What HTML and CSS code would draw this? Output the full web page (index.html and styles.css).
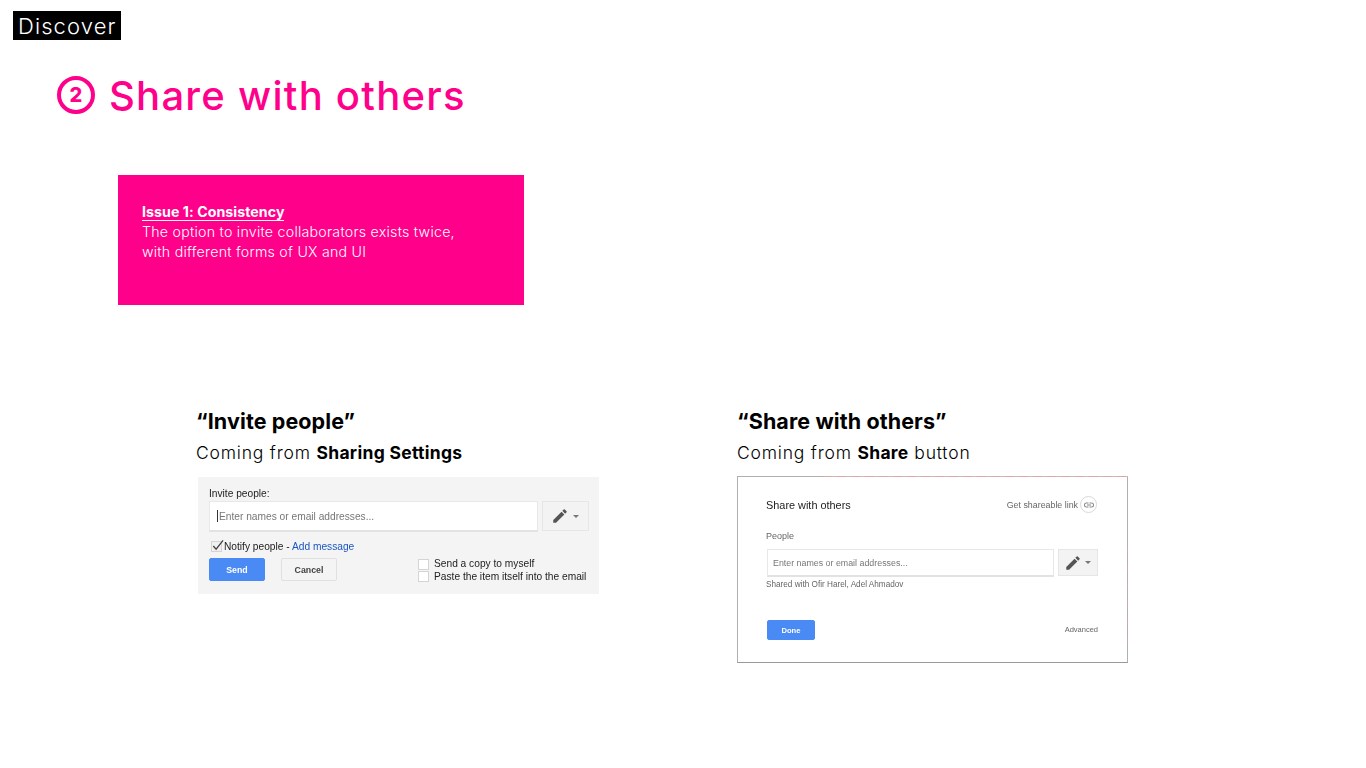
FILE: index.html
```html
<!DOCTYPE html>
<html lang="en">

<head>
  <meta charset="UTF-8">
  <meta name="viewport" content="width=device-width,initial-scale=1.0">
  <title>Discover - Share with others</title>
  <link rel="stylesheet" href="styles.css">
</head>

<body>
  <div class="slide">
    <div class="tag">Discover</div>

    <h1 class="title">
      <span class="step">2</span>
      <span>Share with others</span>
    </h1>

    <div class="callout">
      <div class="callout-head">Issue 1: Consistency</div>
      <p>The option to invite collaborators exists twice,<br>with different forms of UX and UI</p>
    </div>

    <div class="compare">
      <!-- left: sharing settings -->
      <section class="col">
        <h2>“Invite people”</h2>
        <p class="from">Coming from <b>Sharing Settings</b></p>

        <div class="shot invite">
          <div class="invite-label">Invite people:</div>
          <div class="input-row">
            <div class="input"><span class="caret"></span>Enter names or email addresses...</div>
            <div class="perm">
              <svg class="pencil" viewBox="0 0 24 24"><path d="M3 17.25V21h3.75L17.81 9.94l-3.75-3.75L3 17.25zM20.71 7.04a1 1 0 0 0 0-1.41l-2.34-2.34a1 1 0 0 0-1.41 0l-1.83 1.83 3.75 3.75 1.83-1.83z"/></svg>
              <span class="arrow"></span>
            </div>
          </div>
          <div class="notify">
            <span class="check on">
              <svg viewBox="0 0 14 14"><path d="M2.5 7.5 5.5 11 13 1.5" fill="none" stroke="#444" stroke-width="1.4"/></svg>
            </span>
            <span>Notify people - <a>Add message</a></span>
          </div>
          <div class="actions">
            <button class="btn primary">Send</button>
            <button class="btn">Cancel</button>
            <div class="options">
              <div class="option"><span class="check"></span>Send a copy to myself</div>
              <div class="option"><span class="check"></span>Paste the item itself into the email</div>
            </div>
          </div>
        </div>
      </section>

      <!-- right: share button -->
      <section class="col">
        <h2>“Share with others”</h2>
        <p class="from">Coming from <b>Share</b> button</p>

        <div class="shot dialog">
          <div class="dialog-head">
            <span class="dialog-title">Share with others</span>
            <span class="link">Get shareable link
              <span class="link-icon">
                <svg viewBox="0 0 24 24"><path d="M3.9 12c0-1.71 1.39-3.1 3.1-3.1h4V7H7a5 5 0 0 0 0 10h4v-1.9H7c-1.71 0-3.1-1.39-3.1-3.1zM8 13h8v-2H8v2zm9-6h-4v1.9h4c1.71 0 3.1 1.39 3.1 3.1s-1.39 3.1-3.1 3.1h-4V17h4a5 5 0 0 0 0-10z"/></svg>
              </span>
            </span>
          </div>
          <div class="people">People</div>
          <div class="input-row">
            <div class="input">Enter names or email addresses...</div>
            <div class="perm">
              <svg class="pencil" viewBox="0 0 24 24"><path d="M3 17.25V21h3.75L17.81 9.94l-3.75-3.75L3 17.25zM20.71 7.04a1 1 0 0 0 0-1.41l-2.34-2.34a1 1 0 0 0-1.41 0l-1.83 1.83 3.75 3.75 1.83-1.83z"/></svg>
              <span class="arrow"></span>
            </div>
          </div>
          <div class="shared">Shared with Ofir Harel, Adel Ahmadov</div>
          <div class="dialog-foot">
            <button class="btn primary">Done</button>
            <span class="advanced">Advanced</span>
          </div>
        </div>
      </section>
    </div>
  </div>
</body>

</html>
```

FILE: styles.css
```css
body {
  margin: 0;
  background: #fff;
  font-family: "Inter", sans-serif;
  color: #000;
}

.slide {
  width: 1366px;
  height: 768px;
  overflow: hidden;
}

.tag {
  display: flex;
  align-items: center;
  width: 103px;
  height: 29px;
  margin: 11px 0 0 13px;
  padding-left: 5px;
  background: #000;
  color: #fff;
  font-size: 22px;
  font-weight: 300;
  letter-spacing: 1.1px;
}

/* --------------------------------------------------------------
   title
   -------------------------------------------------------------- */
.title {
  display: flex;
  align-items: center;
  gap: 14px;
  height: 46px;
  margin: 32px 0 0 57px;
  color: #ff008a;
  font-size: 40px;
  font-weight: 500;
  letter-spacing: 1.25px;
}

.step {
  display: flex;
  align-items: center;
  justify-content: center;
  box-sizing: border-box;
  width: 38px;
  height: 38px;
  border: 4px solid #ff008a;
  border-radius: 50%;
  font-size: 20px;
  font-weight: 800;
  letter-spacing: 0;
}

/* --------------------------------------------------------------
   callout
   -------------------------------------------------------------- */
.callout {
  box-sizing: border-box;
  width: 406px;
  height: 130px;
  margin: 57px 0 0 118px;
  padding: 27px 24px 0;
  background: #ff008a;
  color: #fff;
  font-size: 14.2px;
  line-height: 20px;
  letter-spacing: 0.25px;
}

.callout-head {
  display: inline-block;
  border-bottom: 1px solid #fff;
  font-weight: 700;
  line-height: 17px;
  letter-spacing: 0.05px;
}

.callout p {
  margin: 0;
  font-weight: 300;
}

/* --------------------------------------------------------------
   comparison
   -------------------------------------------------------------- */
.compare {
  display: grid;
  grid-template-columns: 541px 400px;
  margin: 102px 0 0 196px;
}

.col h2 {
  margin: 0;
  font-size: 21.5px;
  font-weight: 700;
  line-height: 29px;
  letter-spacing: 0.1px;
}

.from {
  margin: 4px 0 0;
  font-size: 17.5px;
  font-weight: 300;
  line-height: 26px;
  letter-spacing: 0.8px;
}

.from b {
  font-weight: 700;
  letter-spacing: 0.3px;
}

.shot {
  box-sizing: border-box;
  font-family: "Liberation Sans", sans-serif;
  filter: blur(0.4px);
}

/* shared controls */
.input-row {
  display: flex;
}

.input {
  display: flex;
  align-items: center;
  box-sizing: border-box;
  background: #fff;
  border: 1px solid #e8e8e8;
  border-bottom: 2px solid #e2e2e2;
  color: #777;
}

.caret {
  width: 1px;
  height: 12px;
  margin-right: 1px;
  background: #333;
}

.perm {
  display: flex;
  align-items: center;
  box-sizing: border-box;
  background: #f3f3f3;
  border: 1px solid #e6e6e6;
}

.pencil {
  width: 18px;
  height: 18px;
  fill: #555;
}

.arrow {
  width: 0;
  height: 0;
  margin-left: 4px;
  border: 3px solid transparent;
  border-top: 3px solid #777;
  border-bottom: 0;
}

.btn {
  flex: none;
  box-sizing: border-box;
  padding: 0;
  background: #f4f4f4;
  border: 1px solid #e0e0e0;
  border-radius: 2px;
  color: #444;
  font-family: "Liberation Sans", sans-serif;
  font-weight: 700;
}

.btn.primary {
  background: #4a8af4;
  border-color: #4a8af4;
  color: #fff;
}

.check {
  display: inline-block;
  flex: none;
  box-sizing: border-box;
  width: 11px;
  height: 11px;
  background: #fff;
  border: 1px solid #d4d4d4;
}

/* invite people panel */
.invite {
  width: 401px;
  height: 117px;
  margin: 11px 0 0 2px;
  padding: 10px 10px 0 11px;
  background: #f4f4f4;
  font-size: 10.2px;
  color: #222;
}

.invite-label {
  line-height: 13px;
}

.invite .input-row {
  gap: 4px;
  margin-top: 1px;
}

.invite .input {
  width: 329px;
  height: 31px;
  padding-left: 7px;
}

.invite .perm {
  width: 47px;
  height: 30px;
  padding-left: 8px;
}

.notify {
  display: flex;
  align-items: center;
  gap: 2px;
  height: 14px;
  margin: 7px 0 0 2px;
  color: #222;
}

.notify a {
  color: #1a56c4;
}

.check.on {
  position: relative;
  background: #f0f0f0;
}

.check.on svg {
  position: absolute;
  left: -1px;
  top: -3px;
  width: 13px;
  height: 13px;
}

.actions {
  display: flex;
  margin-top: 5px;
}

.actions .btn {
  width: 56px;
  height: 23px;
  margin-right: 16px;
  font-size: 8.8px;
}

.options {
  margin: 0 0 0 65px;
  line-height: 12.5px;
}

.option {
  display: flex;
  align-items: center;
  gap: 5px;
  white-space: nowrap;
}

/* share with others dialog */
.dialog {
  position: relative;
  width: 391px;
  height: 187px;
  margin-top: 10px;
  padding: 19px 29px 0 28px;
  background: #fff;
  border: 1px solid #b0b0b0;
  border-bottom-color: #999;
}

/* faint red bleed from the slide behind the screenshot */
.dialog::before {
  content: "";
  position: absolute;
  top: -1px;
  left: 85px;
  right: -1px;
  height: 1px;
  background: repeating-linear-gradient(90deg, #dca6a6 0 9px, #c9b9b9 9px 14px);
}

.dialog::after {
  content: "";
  position: absolute;
  top: 70px;
  bottom: 10px;
  right: -1px;
  width: 1px;
  background: repeating-linear-gradient(180deg, #c9a9a9 0 6px, #b0b0b0 6px 18px);
}

.dialog-head {
  display: flex;
  align-items: center;
  justify-content: space-between;
  height: 17px;
}

.dialog-title {
  font-size: 10.9px;
  color: #222;
}

.link {
  display: flex;
  align-items: center;
  gap: 2px;
  margin-right: 1px;
  font-size: 8.85px;
  color: #666;
}

.link-icon {
  display: flex;
  align-items: center;
  justify-content: center;
  box-sizing: border-box;
  width: 17px;
  height: 17px;
  border: 1px solid #d8d8d8;
  border-radius: 50%;
}

.link-icon svg {
  width: 12px;
  height: 12px;
  fill: #888;
}

.people {
  margin-top: 17px;
  font-size: 9px;
  line-height: 12px;
  color: #666;
}

.dialog .input-row {
  gap: 4px;
  margin: 7px 0 0 1px;
}

.dialog .input {
  width: 288px;
  height: 28px;
  padding-left: 5px;
  font-size: 8.85px;
}

.dialog .perm {
  width: 40px;
  height: 27px;
  padding-left: 5px;
}

.dialog .arrow {
  margin-left: 3px;
}

.shared {
  margin-top: 2px;
  font-size: 8.2px;
  line-height: 12px;
  color: #666;
}

.dialog-foot {
  display: flex;
  align-items: center;
  justify-content: space-between;
  margin: 29px 0 0 1px;
}

.dialog-foot .btn {
  width: 48px;
  height: 20px;
  font-size: 7.6px;
}

.advanced {
  margin-bottom: 2px;
  font-size: 7.5px;
  color: #666;
}
```
